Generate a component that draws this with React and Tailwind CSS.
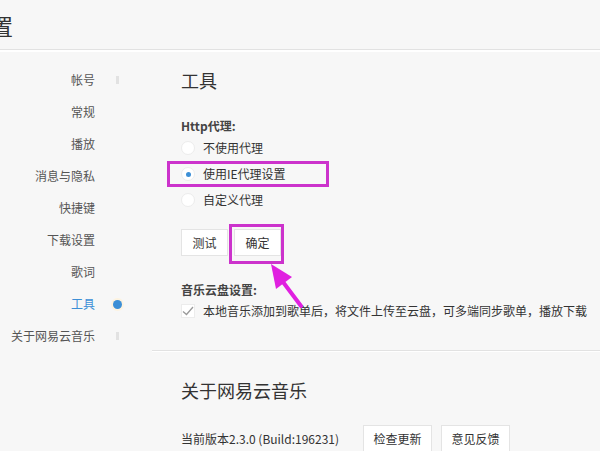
import React from "react";

const font = { fontFamily: '"Noto Sans CJK SC", "Noto Sans", sans-serif' };

const navItems = [
  "帐号",
  "常规",
  "播放",
  "消息与隐私",
  "快捷键",
  "下载设置",
  "歌词",
  "工具",
  "关于网易云音乐",
];

const Radio = ({ checked }) => (
  <span className="w-[14px] h-[14px] rounded-full bg-white border border-[#ececec] flex items-center justify-center shrink-0">
    {checked && <span className="w-[5px] h-[5px] rounded-full bg-[#3d8fd6]"></span>}
  </span>
);

const Btn = ({ children, className = "" }) => (
  <button
    className={`h-[27px] bg-white border border-[#e4e4e4] text-[12px] text-[#333] flex items-center justify-center ${className}`}
  >
    {children}
  </button>
);

export default function App() {
  return (
    <div className="relative w-[600px] h-[451px] overflow-hidden bg-[#f7f7f7] text-[#333]" style={font}>
      {/* header */}
      <div className="h-[49px] flex items-center">
        <span className="ml-[-31px] text-[22px] leading-none text-[#333]">设置</span>
      </div>
      <div className="h-[1px] bg-[#e2e2e2]"></div>
      <div className="h-[2px] bg-white"></div>

      <div className="flex">
        {/* sidebar */}
        <div className="w-[152px] pt-[12px] shrink-0">
          {navItems.map((item) => {
            const active = item === "工具";
            const tick = item === "帐号" || item === "关于网易云音乐";
            return (
              <div key={item} className="h-[32px] flex items-center">
                <span
                  className={`w-[95px] text-right text-[12px] ${active ? "text-[#3d8fd6]" : "text-[#555]"}`}
                >
                  {item}
                </span>
                <span className="w-[44px] flex justify-center">
                  {active && (
                    <span className="w-[9px] h-[9px] rounded-full bg-[#3d8fd6] shadow-[0_0_0_2px_#fdf3e0]"></span>
                  )}
                  {tick && <span className="w-[3px] h-[8px] bg-[#e2e2e2]"></span>}
                </span>
              </div>
            );
          })}
        </div>

        {/* content */}
        <div className="flex-1 min-w-0">
          <div className="pl-[29px] pt-[16px]">
            <div className="h-[24px] leading-[24px] text-[18px] text-[#333]">工具</div>
            <div className="mt-[26px] h-[16px] leading-[16px] text-[12px] font-bold text-[#444]">Http代理:</div>
            <div className="mt-[1px]">
              <div className="h-[26px] flex items-center gap-[8px]">
                <Radio />
                <span className="text-[12px]">不使用代理</span>
              </div>
              <div className="relative h-[26px] flex items-center gap-[8px]">
                <Radio checked />
                <span className="text-[12px]">使用IE代理设置</span>
                <div className="absolute left-[-14px] top-0 w-[162px] h-[26px] border-[3px] border-[#cc33cc]"></div>
              </div>
              <div className="h-[26px] flex items-center gap-[8px]">
                <Radio />
                <span className="text-[12px]">自定义代理</span>
              </div>
            </div>
            <div className="mt-[16px] flex gap-[6px]">
              <Btn className="w-[47px]">测试</Btn>
              <div className="relative">
                <Btn className="w-[47px]">确定</Btn>
                <div className="absolute left-[-5px] top-[-5px] w-[55px] h-[40px] border-[3px] border-[#cc33cc]"></div>
              </div>
            </div>
            <div className="mt-[26px] h-[16px] leading-[16px] text-[12px] font-bold text-[#444]">音乐云盘设置:</div>
            <div className="mt-[3px] h-[20px] flex items-center gap-[8px]">
              <span className="w-[14px] h-[14px] bg-white border border-[#ececec] flex items-center justify-center shrink-0">
                <svg width="12" height="10" viewBox="0 0 12 10" fill="none">
                  <path d="M1 5.5 L4.5 8.5 L11 1" stroke="#9a9a9a" strokeWidth="1.3" />
                </svg>
              </span>
              <span className="text-[12px] whitespace-nowrap">
                本地音乐添加到歌单后，将文件上传至云盘，可多端同步歌单，播放下载
              </span>
            </div>
          </div>

          <div className="mt-[29px] h-[1px] bg-[#e2e2e2]"></div>
          <div className="h-[1px] bg-white"></div>

          <div className="pl-[29px] pt-[26px]">
            <div className="h-[24px] leading-[24px] text-[18px] text-[#333]">关于网易云音乐</div>
            <div className="mt-[23px] flex items-center">
              <span className="w-[182px] text-[12px] text-[#333]">当前版本2.3.0 (Build:196231)</span>
              <div className="flex gap-[9px]">
                <Btn className="w-[69px]">检查更新</Btn>
                <Btn className="w-[69px]">意见反馈</Btn>
              </div>
            </div>
          </div>
        </div>
      </div>

      {/* annotation arrow */}
      <svg className="absolute left-0 top-0 pointer-events-none" width="600" height="451">
        <line x1="301" y1="306" x2="280" y2="278" stroke="#e020e0" strokeWidth="4" strokeLinecap="round" />
        <polygon points="271,264 292,277 276,289" fill="#e020e0" />
      </svg>
    </div>
  );
}
